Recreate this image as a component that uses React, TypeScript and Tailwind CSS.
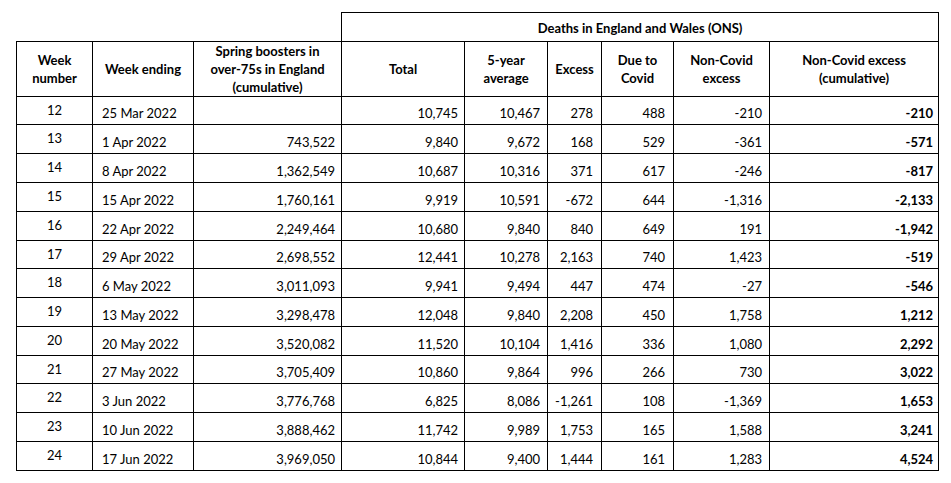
const rows: [string, string, string, string, string, string, string, string, string][] = [
  ["12", "25 Mar 2022", "", "10,745", "10,467", "278", "488", "-210", "-210"],
  ["13", "1 Apr 2022", "743,522", "9,840", "9,672", "168", "529", "-361", "-571"],
  ["14", "8 Apr 2022", "1,362,549", "10,687", "10,316", "371", "617", "-246", "-817"],
  ["15", "15 Apr 2022", "1,760,161", "9,919", "10,591", "-672", "644", "-1,316", "-2,133"],
  ["16", "22 Apr 2022", "2,249,464", "10,680", "9,840", "840", "649", "191", "-1,942"],
  ["17", "29 Apr 2022", "2,698,552", "12,441", "10,278", "2,163", "740", "1,423", "-519"],
  ["18", "6 May 2022", "3,011,093", "9,941", "9,494", "447", "474", "-27", "-546"],
  ["19", "13 May 2022", "3,298,478", "12,048", "9,840", "2,208", "450", "1,758", "1,212"],
  ["20", "20 May 2022", "3,520,082", "11,520", "10,104", "1,416", "336", "1,080", "2,292"],
  ["21", "27 May 2022", "3,705,409", "10,860", "9,864", "996", "266", "730", "3,022"],
  ["22", "3 Jun 2022", "3,776,768", "6,825", "8,086", "-1,261", "108", "-1,369", "1,653"],
  ["23", "10 Jun 2022", "3,888,462", "11,742", "9,989", "1,753", "165", "1,588", "3,241"],
  ["24", "17 Jun 2022", "3,969,050", "10,844", "9,400", "1,444", "161", "1,283", "4,524"],
];

// row heights so the grid lines land where the sheet has them
const heights = [28, 29, 29, 29, 29, 28, 29, 29, 29, 28, 29, 29, 29];

const cell = "border border-black p-0";

export default function App() {
  return (
    <div className="w-[951px] h-[483px] bg-white text-black font-['Lato',sans-serif] text-[13px] pt-[12px] pl-[16px]">
      <table className="table-fixed border-collapse w-[922px]">
        <colgroup>
          <col className="w-[76px]" />
          <col className="w-[101px]" />
          <col className="w-[148px]" />
          <col className="w-[123px]" />
          <col className="w-[83px]" />
          <col className="w-[54px]" />
          <col className="w-[72px]" />
          <col className="w-[96px]" />
          <col className="w-[169px]" />
        </colgroup>
        <thead>
          <tr className="h-[29px]">
            <th colSpan={3} className="p-0" />
            <th colSpan={6} className={`${cell} font-bold text-center align-middle pt-[3px]`}>
              Deaths in England and Wales (ONS)
            </th>
          </tr>
          <tr className="h-[55px] font-bold leading-[18px] text-center align-middle">
            <th className={cell}>Week<br />number</th>
            <th className={cell}>Week ending</th>
            <th className={cell}>Spring boosters in<br />over-75s in England<br />(cumulative)</th>
            <th className={cell}>Total</th>
            <th className={cell}>5-year<br />average</th>
            <th className={cell}>Excess</th>
            <th className={cell}>Due to<br />Covid</th>
            <th className={cell}>Non-Covid<br />excess</th>
            <th className={cell}>Non-Covid excess<br />(cumulative)</th>
          </tr>
        </thead>
        <tbody>
          {rows.map((r, i) => (
            <tr key={r[0]} style={{ height: heights[i] }} className="leading-[16px]">
              <td className={`${cell} text-center align-middle pb-[2px]`}>{r[0]}</td>
              <td className={`${cell} align-bottom pl-[9px] pb-[3px]`}>{r[1]}</td>
              <td className={`${cell} align-bottom text-right pr-[6px] pb-[3px]`}>{r[2]}</td>
              <td className={`${cell} align-bottom text-right pr-[6px] pb-[3px]`}>{r[3]}</td>
              <td className={`${cell} align-bottom text-right pr-[7px] pb-[3px]`}>{r[4]}</td>
              <td className={`${cell} align-bottom text-right pr-[8px] pb-[3px]`}>{r[5]}</td>
              <td className={`${cell} align-bottom text-right pr-[8px] pb-[3px]`}>{r[6]}</td>
              <td className={`${cell} align-bottom text-right pr-[7px] pb-[3px]`}>{r[7]}</td>
              <td className={`${cell} align-bottom text-right pr-[5px] pb-[3px] font-bold`}>{r[8]}</td>
            </tr>
          ))}
        </tbody>
      </table>
    </div>
  );
}
